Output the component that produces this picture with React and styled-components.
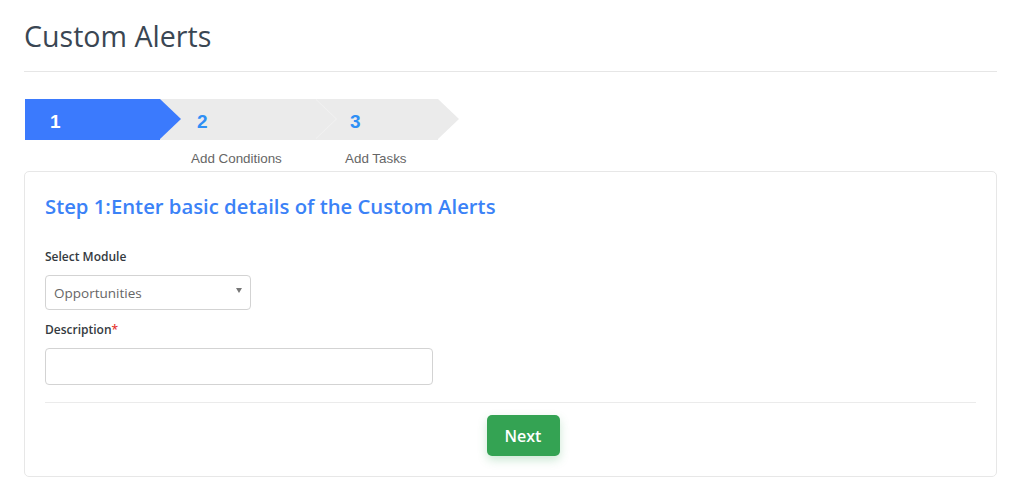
import React from "react";
import styled, { createGlobalStyle } from "styled-components";

const GlobalStyle = createGlobalStyle`
    body {
        margin: 0;
        background: #fff;
        font-family: "Open Sans", "Liberation Sans", sans-serif;
    }
    * { box-sizing: border-box; }
`;

const Page = styled.div`
    padding: 16px 27px 0 24px;
`;

const Title = styled.h1`
    margin: 0;
    font-size: 28.6px;
    font-weight: 400;
    color: #3a4653;
    line-height: 39px;
    padding-bottom: 16px;
    border-bottom: 1px solid #e6e6e6;
`;

const Stepper = styled.div`
    display: flex;
    margin-top: 27px;
    padding-left: 1px;
`;

const StepCol = styled.div`
    display: flex;
    flex-direction: column;
    width: ${({ w }) => w}px;
`;

const Chevron = styled.div`
    position: relative;
    height: 41px;
    display: flex;
    align-items: center;
    padding-left: ${({ pad }) => pad}px;
    padding-top: 4px;
    background: ${({ active }) => (active ? "#3b7afd" : "#ebebeb")};
    color: ${({ active }) => (active ? "#fff" : "#2f8ff5")};
    font-family: "Liberation Sans", Arial, sans-serif;
    font-weight: 700;
    font-size: 19px;
    z-index: ${({ z }) => z};

    &::before {
        content: "";
        position: absolute;
        top: 0;
        left: 100%;
        border-top: 20.5px solid transparent;
        border-bottom: 20.5px solid transparent;
        border-left: 21px solid ${({ outline }) => outline};
        margin-left: 1px;
    }
    &::after {
        content: "";
        position: absolute;
        top: 0;
        left: 100%;
        border-top: 20.5px solid transparent;
        border-bottom: 20.5px solid transparent;
        border-left: 21px solid ${({ active }) => (active ? "#3b7afd" : "#ebebeb")};
    }
`;

const StepLabel = styled.div`
    padding-left: ${({ pad }) => pad}px;
    margin-top: 11px;
    font-family: "Liberation Sans", Arial, sans-serif;
    font-size: 13.4px;
    color: #666;
    height: 15px;
`;

const Card = styled.div`
    margin-top: 5px;
    border: 1px solid #e7e7e7;
    border-radius: 5px;
    padding: 20px 20px 14px 20px;
`;

const Heading = styled.h2`
    margin: 0 0 29px 0;
    font-size: 20.3px;
    font-weight: 600;
    color: #3b82f7;
    line-height: 28px;
`;

const Label = styled.label`
    display: block;
    font-size: 12px;
    font-weight: 600;
    color: #343a40;
    margin-bottom: 10px;
    line-height: 16px;

    & span {
        color: #e53935;
    }
`;

const SelectBox = styled.div`
    position: relative;
    width: 206px;
    height: 35px;
    border: 1px solid #d3d3d3;
    border-radius: 4px;
    padding-left: 8px;
    display: flex;
    align-items: center;
    font-size: 13.5px;
    color: #666;
    margin-bottom: 12px;

    &::after {
        content: "";
        position: absolute;
        right: 8px;
        top: 12px;
        border-left: 3.5px solid transparent;
        border-right: 3.5px solid transparent;
        border-top: 5px solid #777;
    }
`;

const TextInput = styled.input`
    display: block;
    width: 388px;
    height: 37px;
    border: 1px solid #d3d3d3;
    border-radius: 4px;
    outline: none;
    font-family: inherit;
`;

const Divider = styled.hr`
    border: 0;
    border-top: 1px solid #ebebeb;
    margin: 17px 0 12px 0;
`;

const Actions = styled.div`
    display: flex;
    justify-content: center;
    padding-bottom: 6px;
`;

const NextButton = styled.button`
    width: 73px;
    height: 41px;
    border: none;
    border-radius: 5px;
    background: #34a353;
    color: #fff;
    font-family: "Open Sans", sans-serif;
    font-size: 16px;
    font-weight: 600;
    box-shadow: 0 4px 10px rgba(52, 163, 83, 0.25);
    margin-left: 25px;
`;

const steps = [
    { n: "1", w: 135, pad: 25, label: "", labelPad: 0, active: true, outline: "transparent" },
    { n: "2", w: 155, pad: 37, label: "Add Conditions", labelPad: 31, outline: "#f2f2f2" },
    { n: "3", w: 123, pad: 35, label: "Add Tasks", labelPad: 30, outline: "transparent" },
];

const App = () => {
    return (
        <Page>
            <GlobalStyle />
            <Title>Custom Alerts</Title>
            <Stepper>
                {steps.map((s, i) => (
                    <StepCol key={s.n} w={s.w}>
                        <Chevron
                            active={s.active}
                            pad={s.pad}
                            outline={s.outline}
                            z={3 - i}
                        >
                            {s.n}
                        </Chevron>
                        <StepLabel pad={s.labelPad}>{s.label}</StepLabel>
                    </StepCol>
                ))}
            </Stepper>
            <Card>
                <Heading>Step 1:Enter basic details of the Custom Alerts</Heading>
                <Label>Select Module</Label>
                <SelectBox>Opportunities</SelectBox>
                <Label>
                    Description<span>*</span>
                </Label>
                <TextInput />
                <Divider />
                <Actions>
                    <NextButton>Next</NextButton>
                </Actions>
            </Card>
        </Page>
    );
};

export default App;
